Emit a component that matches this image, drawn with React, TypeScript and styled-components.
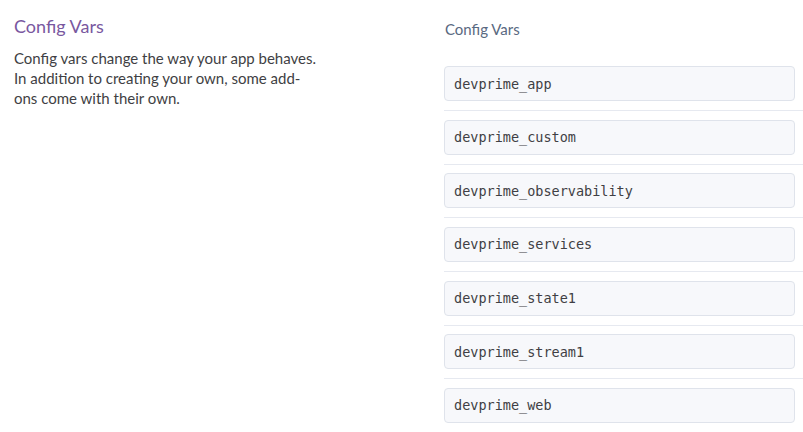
import React from "react";
import styled, { createGlobalStyle } from "styled-components";

const Global = createGlobalStyle`
  html, body { margin: 0; padding: 0; background: #ffffff; }
  body { font-family: Lato, "Open Sans", sans-serif; }
`;

const Page = styled.div`
  display: grid;
  grid-template-columns: 444px 1fr;
  width: 803px;
  height: 432px;
  overflow: hidden;
`;

const Intro = styled.section`
  padding: 14px 0 0 14px;
`;

const Title = styled.h2`
  margin: 0;
  font-weight: 400;
  font-size: 18px;
  line-height: 24px;
  color: #79589f;
`;

const Desc = styled.p`
  margin: 10px 0 0;
  font-size: 15px;
  line-height: 20px;
  color: #3f3f44;
`;

const Vars = styled.section`
  padding-top: 18px;
`;

const Label = styled.div`
  margin-left: 1px;
  font-size: 15px;
  line-height: 22px;
  color: #596981;
`;

const List = styled.div`
  margin-top: 26px;
  display: flex;
  flex-direction: column;
`;

const Row = styled.div<{ $last?: boolean }>`
  padding-bottom: ${(p) => (p.$last ? "0" : "9px")};
  margin-bottom: ${(p) => (p.$last ? "0" : "8.67px")};
  border-bottom: ${(p) => (p.$last ? "none" : "1px solid #e6e9f0")};
`;

const Field = styled.div`
  box-sizing: border-box;
  width: 351px;
  height: 35px;
  padding: 0 9px;
  display: flex;
  align-items: center;
  background: #f7f8fb;
  border: 1px solid #dfe3eb;
  border-radius: 4px;
  font-family: "DejaVu Sans Mono", "Liberation Mono", monospace;
  font-size: 13.5px;
  color: #3f3f44;
`;

const vars = [
  "devprime_app",
  "devprime_custom",
  "devprime_observability",
  "devprime_services",
  "devprime_state1",
  "devprime_stream1",
  "devprime_web",
];

export default function App() {
  return (
    <>
      <Global />
      <Page>
        <Intro>
          <Title>Config Vars</Title>
          <Desc>
            Config vars change the way your app behaves.
            <br />
            In addition to creating your own, some add-
            <br />
            ons come with their own.
          </Desc>
        </Intro>
        <Vars>
          <Label>Config Vars</Label>
          <List>
            {vars.map((v, i) => (
              <Row key={v} $last={i === vars.length - 1}>
                <Field>{v}</Field>
              </Row>
            ))}
          </List>
        </Vars>
      </Page>
    </>
  );
}
